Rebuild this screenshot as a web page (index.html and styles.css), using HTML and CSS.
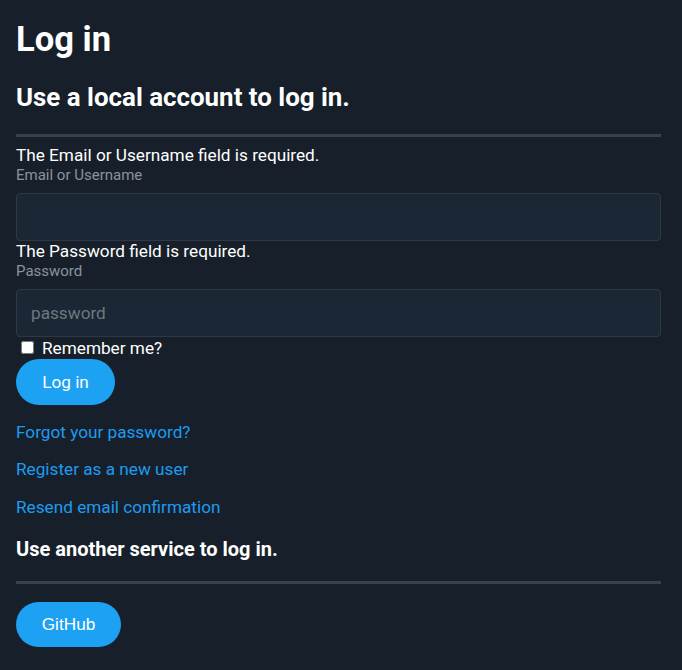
FILE: index.html
```html
<!DOCTYPE html>
<html lang="en">
<head>
<meta charset="utf-8">
<title>Log in</title>
<link rel="stylesheet" href="styles.css">
</head>
<body>
<main class="page">
  <h1 class="title">Log in</h1>
  <section class="local">
    <form class="login-form">
      <h2 class="subtitle">Use a local account to log in.</h2>
      <hr class="rule">
      <div class="field">
        <span class="error">The Email or Username field is required.</span>
        <label class="label" for="email">Email or Username</label>
        <input class="input" id="email" type="text">
      </div>
      <div class="field">
        <span class="error">The Password field is required.</span>
        <label class="label" for="pw">Password</label>
        <input class="input" id="pw" type="password" placeholder="password">
      </div>
      <div class="remember">
        <input class="check" type="checkbox" id="rem">
        <label class="remember-label" for="rem">Remember me?</label>
      </div>
      <button class="btn btn-login" type="button">Log in</button>
      <div class="links">
        <a class="link" href="#">Forgot your password?</a>
        <a class="link" href="#">Register as a new user</a>
        <a class="link" href="#">Resend email confirmation</a>
      </div>
    </form>
  </section>
  <section class="external">
    <h3 class="section-title">Use another service to log in.</h3>
    <hr class="rule rule-second">
    <button class="btn btn-provider" type="button">GitHub</button>
  </section>
</main>
</body>
</html>
```

FILE: styles.css
```css
* { box-sizing: border-box; }
html, body { margin: 0; padding: 0; }
body {
  background: #17202a;
  color: #ffffff;
  font-family: Roboto, "Liberation Sans", Arial, sans-serif;
  font-size: 17.2px;
  line-height: 1.5;
}
.page {
  width: 645px;
  margin-left: 16px;
  padding-top: 18px;
}
.title {
  margin: 0;
  font-size: 34.6px;
  font-weight: 700;
  line-height: 42px;
}
.subtitle {
  margin: 21.6px 0 0;
  font-size: 25.9px;
  font-weight: 700;
  line-height: 31px;
}
.rule {
  align-self: stretch;
  width: 100%;
  border: 0;
  height: 3px;
  background: #394149;
  margin: 21.4px 0 8px;
}
.login-form { display: flex; flex-direction: column; align-items: flex-start; }
.field { display: flex; flex-direction: column; width: 100%; }
.error { line-height: 21px; }
.label {
  color: #8a939e;
  font-size: 15px;
  line-height: 17px;
  margin-top: 1px;
  margin-bottom: 9px;
}
.input {
  width: 100%;
  height: 48px;
  background: #1b2734;
  border: 1px solid #2e3945;
  border-radius: 4px;
  color: #fff;
  font-family: Roboto, "Liberation Sans", sans-serif;
  font-size: 17.2px;
  padding: 0 14px;
  outline: none;
}
.input::placeholder { color: #6f777f; }
.remember {
  display: flex;
  align-items: center;
  gap: 8px;
  margin-left: 5px;
  height: 22px;
}
.check {
  width: 13px;
  height: 13px;
  margin: 0;
}
.remember-label { line-height: 22px; }
.btn {
  border: 0;
  border-radius: 24px;
  background: #1da1f2;
  color: #fff;
  font-size: 17.2px;
  cursor: pointer;
}
.btn-login {
  width: 99px;
  height: 46px;
  font-family: Roboto, sans-serif;
}
.links {
  display: flex;
  flex-direction: column;
  gap: 13.5px;
  margin-top: 15px;
}
.link {
  color: #1d9bf0;
  text-decoration: none;
  line-height: 24px;
}
.section-title {
  margin: 18px 0 0;
  font-size: 20px;
  font-weight: 700;
  line-height: 24px;
}
.rule-second { margin: 20px 0 18px; }
.btn-provider {
  width: 105px;
  height: 45px;
  font-family: "Liberation Sans", Arial, sans-serif;
}
```
